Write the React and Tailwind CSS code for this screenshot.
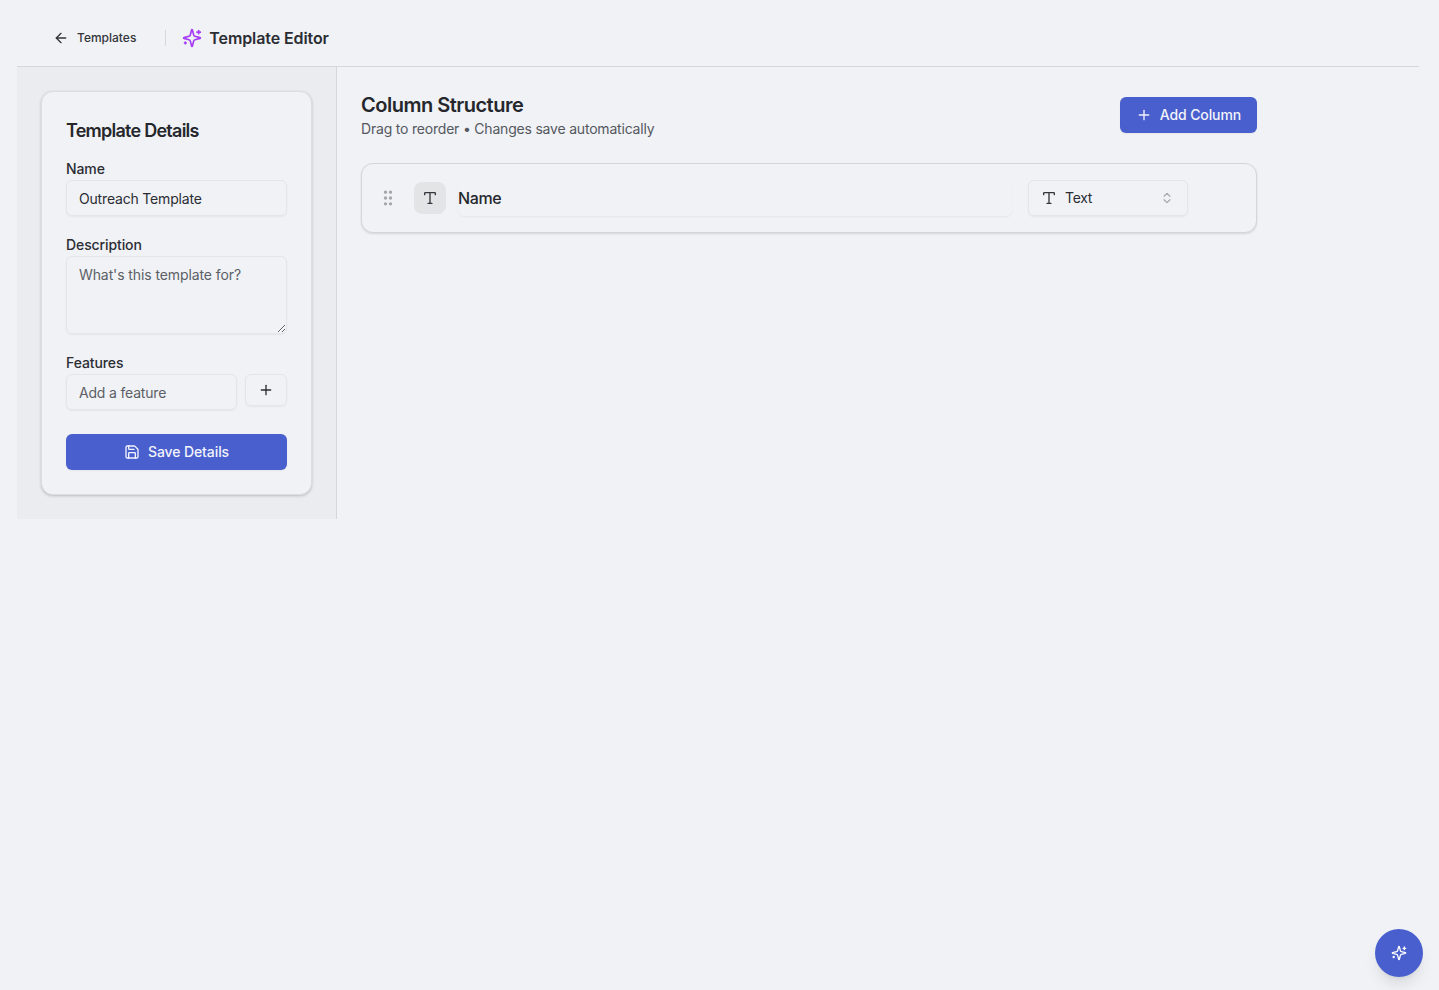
import React from "react";
import { ArrowLeft, ChevronsUpDown, GripVertical, Plus, Save, Type } from "lucide-react";

const inputCls =
  "h-9 w-full rounded-md border border-[#e4e5e8] bg-transparent px-3 text-sm tracking-[-0.18px] text-[#2b2d33] shadow-xs outline-none placeholder:text-[#5c5f66]";

function SparklesIcon({ size = 16, className = "" }) {
  return (
    <svg
      width={size}
      height={size}
      viewBox="0 0 24 24"
      fill="none"
      stroke="currentColor"
      strokeWidth="2"
      strokeLinecap="round"
      strokeLinejoin="round"
      className={className}
    >
      <path d="M9.937 15.5A2 2 0 0 0 8.5 14.063l-6.135-1.582a.5.5 0 0 1 0-.962L8.5 9.936A2 2 0 0 0 9.937 8.5l1.582-6.135a.5.5 0 0 1 .963 0L14.063 8.5A2 2 0 0 0 15.5 9.937l6.135 1.581a.5.5 0 0 1 0 .964L15.5 14.063a2 2 0 0 0-1.437 1.437l-1.582 6.135a.5.5 0 0 1-.963 0z" />
      <path d="M20 3v4" />
      <path d="M22 5h-4" />
      <path d="M4 17v2" />
      <path d="M5 18H3" />
    </svg>
  );
}

function Field({ label, children }) {
  return (
    <div className="flex flex-col">
      <label className="h-5 text-sm leading-[18px] font-medium tracking-[-0.1px] text-[#2b2d33]">{label}</label>
      {children}
    </div>
  );
}

function DetailsCard() {
  return (
    <div className="flex flex-col rounded-xl border border-[#dcdde1] bg-[#f0f2f6] p-6 shadow-[0_1px_3px_rgba(0,0,0,0.2)]">
      <h2 className="h-7 text-lg leading-[30px] font-semibold tracking-[-0.75px] text-[#25272c]">Template Details</h2>
      <div className="mt-4 flex flex-col gap-5">
        <Field label="Name">
          <input defaultValue="Outreach Template" className={inputCls} />
        </Field>
        <Field label="Description">
          <textarea
            placeholder="What's this template for?"
            className="h-[78px] w-full rounded-md border border-[#e4e5e8] bg-transparent px-3 py-2 text-sm tracking-[-0.1px] text-[#2b2d33] shadow-xs outline-none placeholder:text-[#5c5f66]"
          />
        </Field>
        <Field label="Features">
          <div className="flex items-start gap-2">
            <input placeholder="Add a feature" className={`flex-1 min-w-0 ${inputCls}`} />
            <button className="flex h-8 w-[42px] shrink-0 items-center justify-center rounded-md border border-[#e4e5e8] text-[#2b2d33] shadow-xs">
              <Plus size={16} />
            </button>
          </div>
        </Field>
      </div>
      <button className="mt-6 flex h-9 items-center justify-center gap-2 rounded-md bg-[#485fcd] text-sm font-medium tracking-[-0.1px] text-[#f3f4fb] shadow-xs">
        <Save size={16} />
        Save Details
      </button>
    </div>
  );
}

function ColumnRow() {
  return (
    <div className="flex items-center rounded-xl border border-[#d5d6da] bg-[#f0f2f6] p-4 shadow-[0_1px_2px_rgba(0,0,0,0.12)]">
      <GripVertical size={20} className="shrink-0 text-[#a3a5ab]" />
      <div className="ml-4 flex h-8 w-8 shrink-0 items-center justify-center rounded-lg bg-[#e3e4e6] text-[#33353a]">
        <Type size={16} />
      </div>
      <input
        defaultValue="Name"
        className="ml-3 h-9 min-w-0 flex-1 rounded-md bg-transparent text-base font-medium tracking-[-0.4px] text-[#25272c] shadow-xs outline-none"
      />
      <div className="ml-4 flex h-9 w-40 shrink-0 items-center rounded-md border border-[#e4e5e8] px-3 text-sm tracking-[-0.3px] text-[#2b2d33] shadow-xs">
        <Type size={16} className="mr-2 text-[#33353a]" />
        <span className="flex-1">Text</span>
        <ChevronsUpDown size={14} className="mr-px text-[#a3a5ab]" />
      </div>
      <div className="ml-4 h-9 w-9 shrink-0" />
    </div>
  );
}

export default function App() {
  return (
    <div
      className="min-h-screen bg-[#f0f2f6] pr-5 pl-[17px]"
      style={{ fontFamily: "Inter, 'Noto Sans', sans-serif" }}
    >
      <header className="flex h-[67px] items-center border-b border-[#d6d7db] pt-[10px] pl-[36px]">
        <button className="flex items-center gap-2 text-xs font-medium text-[#33353a]">
          <ArrowLeft size={16} />
          Templates
        </button>
        <div className="mr-4 ml-[29px] h-4 w-px bg-[#d6d7db]" />
        <SparklesIcon size={20} className="text-[#a63cf5]" />
        <h1 className="ml-[7px] text-base font-semibold tracking-[-0.1px] text-[#2b2d33]">Template Editor</h1>
      </header>

      <div className="flex items-start">
        <aside className="w-[320px] shrink-0 border-r border-[#d6d7db] bg-[#ebecf0] p-6">
          <DetailsCard />
        </aside>
        <main className="flex-1 p-6">
          <div className="max-w-4xl">
            <div className="mb-6 flex items-center justify-between">
              <div>
                <h2 className="text-xl leading-7 font-semibold tracking-tight text-[#25272c]">Column Structure</h2>
                <p className="text-sm leading-5 tracking-[-0.2px] text-[#55585f]">Drag to reorder • Changes save automatically</p>
              </div>
              <button className="flex h-9 items-center gap-2 rounded-md bg-[#485fcd] px-4 text-sm font-medium tracking-[-0.12px] text-[#f3f4fb] shadow-xs">
                <Plus size={16} />
                Add Column
              </button>
            </div>
            <ColumnRow />
          </div>
        </main>
      </div>

      <button className="fixed right-4 bottom-[13px] flex h-12 w-12 items-center justify-center rounded-full bg-[#485fcd] text-white shadow-lg">
        <SparklesIcon size={16} />
      </button>
    </div>
  );
}
